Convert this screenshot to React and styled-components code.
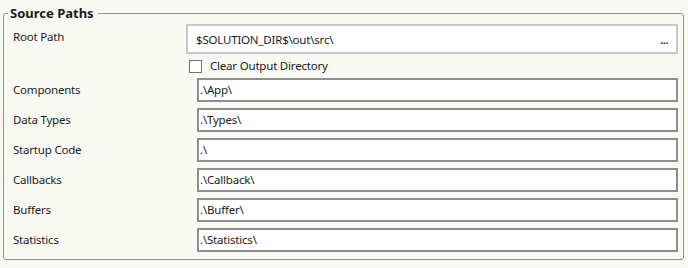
import React from "react";
import styled, { createGlobalStyle } from "styled-components";

const GlobalStyle = createGlobalStyle`
  html, body {
    margin: 0;
    padding: 0;
    background: #f9f9f4;
  }
  body {
    font-family: "Noto Sans", "Open Sans", sans-serif;
    font-size: 11.5px;
    letter-spacing: -0.2px;
    color: #1b1b1b;
  }
`;

const Page = styled.div`
  padding: 5px 4px 0 3px;
  width: 688px;
  box-sizing: border-box;
`;

const GroupBox = styled.fieldset`
  margin: 0;
  padding: 3px 5px 7px 9px;
  border: 1px solid #8f8f8f;
  border-radius: 3px;
  min-width: 0;

  legend {
    font-size: 13px;
    font-weight: 700;
    letter-spacing: 0;
    padding: 0 4px 0 2px;
    margin-left: -5px;
    line-height: 16px;
  }
`;

const Form = styled.div`
  display: grid;
  grid-template-columns: 173px 1fr;
  row-gap: 6px;
  align-items: center;
`;

const Label = styled.div`
  align-self: ${(p) => (p.$top ? "start" : "center")};
  padding-top: ${(p) => p.$top || 0}px;
  margin-top: ${(p) => (p.$top ? 0 : -1)}px;
  line-height: 16px;
`;

const Field = styled.div`
  display: flex;
  align-items: baseline;
  justify-content: space-between;
  box-sizing: border-box;
  height: ${(p) => (p.$root ? 30 : 24)}px;
  margin-left: ${(p) => (p.$root ? 0 : 11)}px;
  padding: ${(p) => (p.$root ? "6px 8px 0 8px" : "2px 2px 0 1px")};
  background: #ffffff;
  border: 2px solid ${(p) => (p.$root ? "#c9c9c9" : "#8e8e8e")};
  line-height: 16px;
  white-space: nowrap;
  overflow: hidden;
`;

const Ellipsis = styled.span`
  font-size: 11px;
  letter-spacing: -0.5px;
  font-weight: 700;
  color: #333;
`;

const CheckRow = styled.label`
  grid-column: 2;
  display: flex;
  align-items: center;
  gap: 8px;
  height: 16px;
  margin: -2px 0 -2px 3px;
  line-height: 16px;
`;

const Box = styled.span`
  width: 11px;
  height: 11px;
  border: 1px solid #727272;
  background: #ffffff;
`;

const rows = [
  ["Components", ".\\App\\"],
  ["Data Types", ".\\Types\\"],
  ["Startup Code", ".\\"],
  ["Callbacks", ".\\Callback\\"],
  ["Buffers", ".\\Buffer\\"],
  ["Statistics", ".\\Statistics\\"],
];

export default function App() {
  return (
    <Page>
      <GlobalStyle />
      <GroupBox>
        <legend>Source Paths</legend>
        <Form>
          <Label $top={5}>Root Path</Label>
          <Field $root>
            <span>$SOLUTION_DIR$\out\src\</span>
            <Ellipsis>...</Ellipsis>
          </Field>
          <CheckRow>
            <Box />
            Clear Output Directory
          </CheckRow>
          {rows.map(([label, value]) => (
            <React.Fragment key={label}>
              <Label>{label}</Label>
              <Field>{value}</Field>
            </React.Fragment>
          ))}
        </Form>
      </GroupBox>
    </Page>
  );
}
